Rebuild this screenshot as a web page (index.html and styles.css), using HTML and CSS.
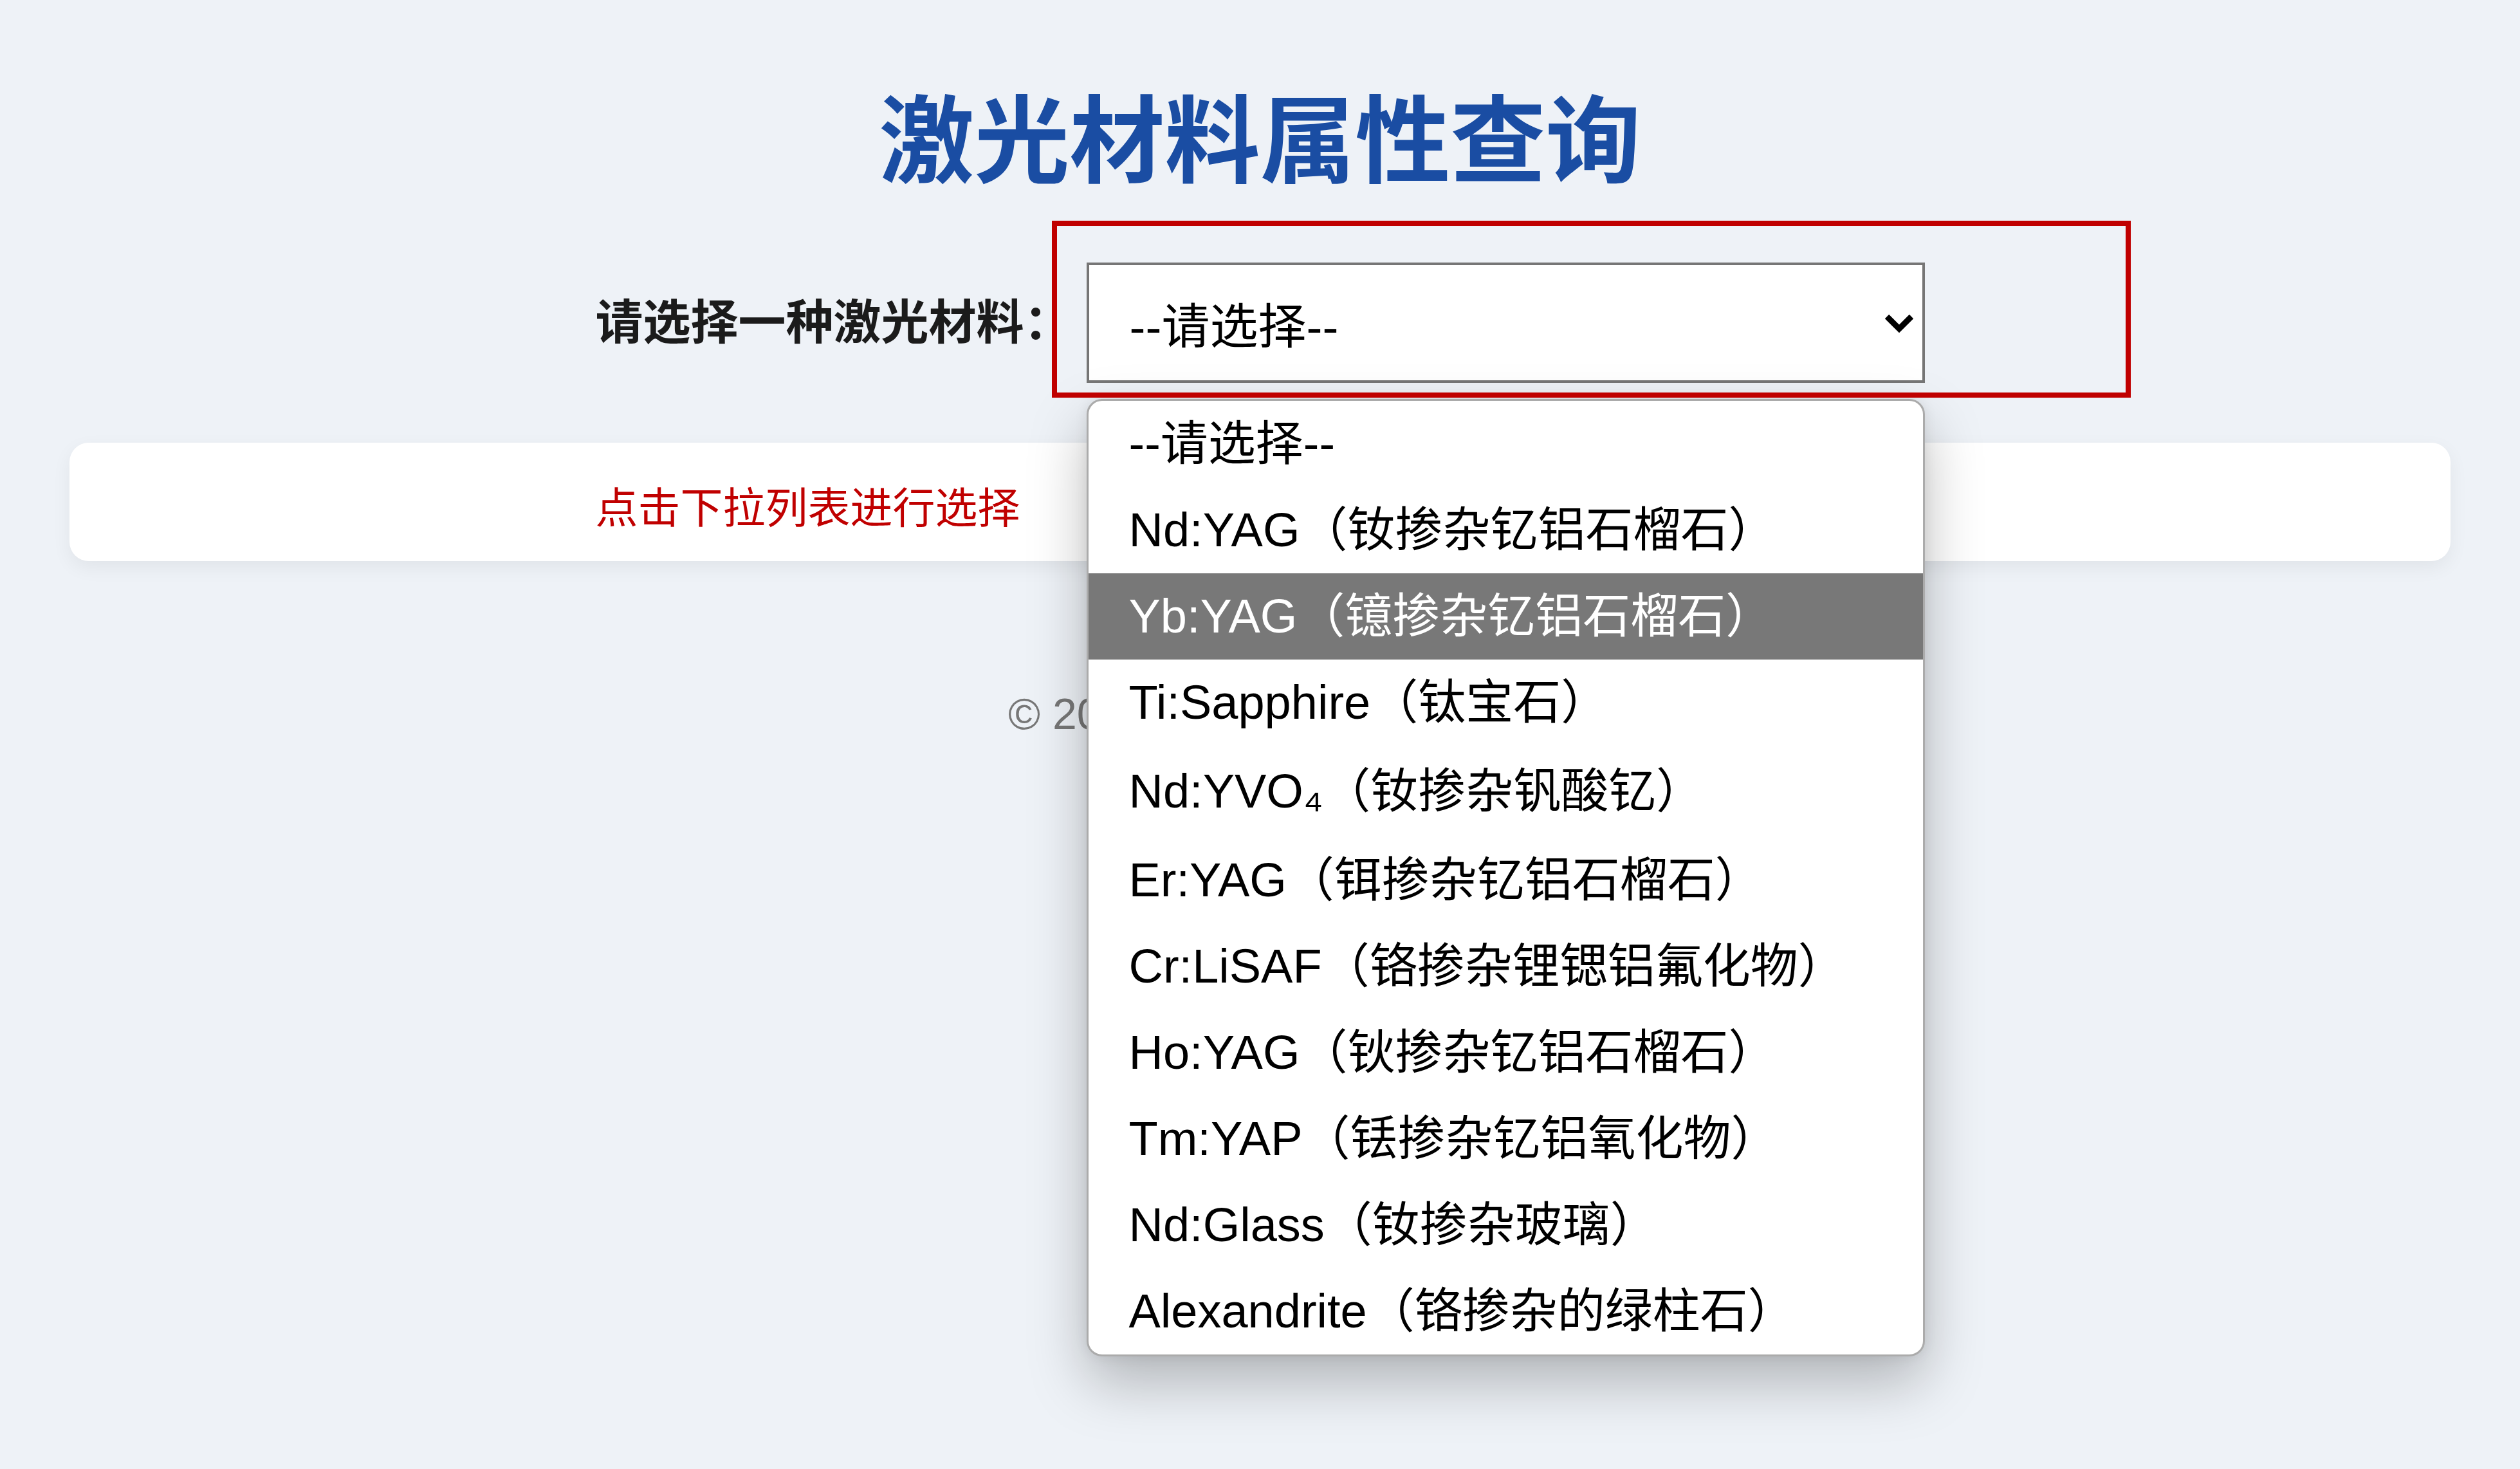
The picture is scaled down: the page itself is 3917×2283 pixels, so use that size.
FILE: index.html
```html
<!DOCTYPE html>
<html lang="zh-CN">
<head>
    <meta charset="UTF-8">
    <meta name="viewport" content="width=device-width, initial-scale=1.0">
    <title>激光材料属性查询</title>
    <link rel="stylesheet" href="styles.css">
</head>
<body>
    <div class="page">
        <h1 class="title">激光材料属性查询</h1>

        <div class="picker">
            <label class="picker-label" for="materialSelect">请选择一种激光材料：</label>
            <div class="select-wrap">
                <div class="select-box" id="materialSelect">
                    <span>--请选择--</span>
                    <svg class="chevron" width="48" height="32" viewBox="0 0 48 32">
                        <polyline points="5,6 24,25 43,6" fill="none" stroke="#000" stroke-width="9"/>
                    </svg>
                </div>

                <!-- 展开的下拉列表 -->
                <ul class="options">
                    <li class="option">--请选择--</li>
                    <li class="option">Nd:YAG（钕掺杂钇铝石榴石）</li>
                    <li class="option selected">Yb:YAG（镱掺杂钇铝石榴石）</li>
                    <li class="option">Ti:Sapphire（钛宝石）</li>
                    <li class="option tall">Nd:YVO₄（钕掺杂钒酸钇）</li>
                    <li class="option">Er:YAG（铒掺杂钇铝石榴石）</li>
                    <li class="option">Cr:LiSAF（铬掺杂锂锶铝氟化物）</li>
                    <li class="option">Ho:YAG（钬掺杂钇铝石榴石）</li>
                    <li class="option">Tm:YAP（铥掺杂钇铝氧化物）</li>
                    <li class="option">Nd:Glass（钕掺杂玻璃）</li>
                    <li class="option">Alexandrite（铬掺杂的绿柱石）</li>
                </ul>
            </div>
        </div>

        <div class="result">
            <div class="result-msg">点击下拉列表进行选择</div>
        </div>

        <footer class="footer">© 2024 激光材料属性查询</footer>
    </div>
</body>
</html>
```

FILE: styles.css
```css
/* 页面基础 */
html, body {
    margin: 0;
    min-height: 100vh;
    background: #eef2f7;
}

body {
    font-family: "Liberation Sans", "Noto Sans CJK SC", sans-serif;
}

.page {
    box-sizing: border-box;
    min-height: 100vh;
    padding: 132px 108px 0;
}

.title {
    margin: 0;
    text-align: center;
    font-size: 148px;
    line-height: 178px;
    font-weight: 700;
    color: #1a4da3;
}

/* 选择区域 */
.picker {
    display: flex;
    justify-content: center;
    align-items: center;
    gap: 23px;
    margin-top: 98px;
}

.picker-label {
    width: 740px;
    font-size: 74px;
    line-height: 90px;
    font-weight: 700;
    color: #1b1b1b;
    white-space: nowrap;
}

.select-wrap {
    position: relative;
}

/* 红色标注框 */
.select-wrap::after {
    content: "";
    position: absolute;
    top: -65px;
    left: -54px;
    right: -320px;
    bottom: -23px;
    border: 8px solid #c00000;
    pointer-events: none;
    z-index: 3;
}

.select-box {
    box-sizing: border-box;
    width: 1303px;
    height: 187px;
    display: flex;
    align-items: center;
    justify-content: space-between;
    padding: 0 12px 0 63px;
    background: #fff;
    border: 4px solid #767676;
    font-size: 75px;
    color: #000;
}

.chevron {
    display: block;
}

.options {
    position: absolute;
    top: 212px;
    left: 0;
    box-sizing: border-box;
    width: 1303px;
    margin: 0;
    padding: 0;
    list-style: none;
    background: #fff;
    border: 3px solid #ababab;
    border-radius: 24px;
    box-shadow: 0 40px 90px rgba(0, 0, 0, 0.26), 0 0 20px rgba(0, 0, 0, 0.08);
    overflow: hidden;
    z-index: 2;
}

.option {
    padding-left: 63px;
    font-size: 74px;
    line-height: 134px;
    color: #000;
    white-space: nowrap;
}

.option.tall {
    line-height: 142px;
}

.option.selected {
    background: #787878;
    color: #fff;
}

/* 结果卡片 */
.result {
    box-sizing: border-box;
    height: 184px;
    margin-top: 93px;
    padding: 64px 0 44px;
    background: #fff;
    border-radius: 30px;
    box-shadow: 0 10px 30px rgba(0, 0, 0, 0.06);
}

.result-msg {
    width: 2066px;
    margin: 0 auto;
    font-size: 66px;
    line-height: 76px;
    color: #c00000;
}

.footer {
    margin-top: 197px;
    text-align: center;
    font-size: 68px;
    line-height: 80px;
    color: #777;
}
```
